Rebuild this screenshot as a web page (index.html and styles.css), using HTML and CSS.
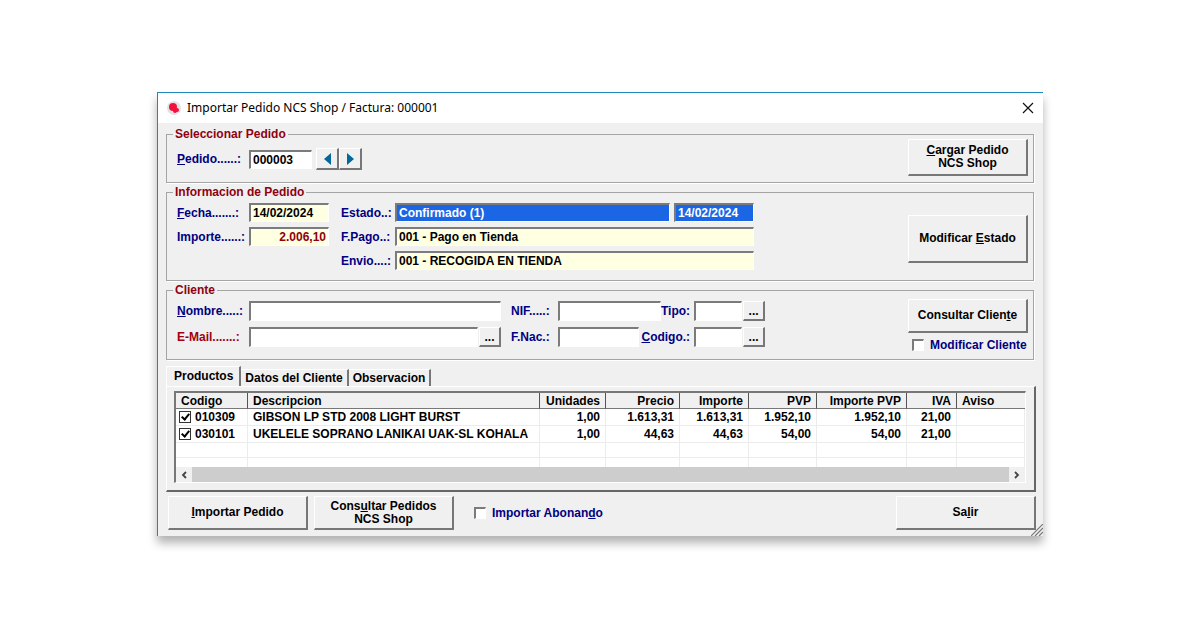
FILE: index.html
```html
<!DOCTYPE html>
<html lang="es">
<head>
  <meta charset="UTF-8" />
  <meta name="viewport" content="width=device-width, initial-scale=1.0"/>
  <title>Importar Pedido NCS Shop</title>
  <link rel="stylesheet" href="styles.css">
</head>
<body>
  <main class="window">
    <header class="titlebar">
      <svg class="logo" width="14" height="14" viewBox="0 0 14 14" aria-hidden="true">
        <circle cx="7" cy="7" r="7" fill="#e2e2e4"/>
        <circle cx="6" cy="6" r="4" fill="#f5103c"/>
        <circle cx="10" cy="9" r="2" fill="#f5103c"/>
        <circle cx="8" cy="10" r="2" fill="#f5103c"/>
      </svg>
      <h1>Importar Pedido NCS Shop / Factura: 000001</h1>
      <button type="button" class="close" aria-label="Cerrar">
        <svg width="12" height="12" viewBox="0 0 12 12"><path d="M1 1L11 11M11 1L1 11" stroke="#111" stroke-width="1.2"/></svg>
      </button>
    </header>

    <form class="content">
      <fieldset class="select-order">
        <legend>Seleccionar Pedido</legend>
        <div class="group">
          <div class="fields">
            <div class="row">
              <label class="first" for="pedido"><u>P</u>edido......:</label>
              <input class="w-order" type="text" id="pedido" value="000003" />
              <div class="nav">
                <button type="button" aria-label="Anterior"><svg width="7" height="12" viewBox="0 0 7 12"><path d="M7 0V12L0 6Z" fill="#00689b"/></svg></button>
                <button type="button" aria-label="Siguiente"><svg width="7" height="12" viewBox="0 0 7 12"><path d="M0 0V12L7 6Z" fill="#00689b"/></svg></button>
              </div>
            </div>
          </div>
          <div class="side">
            <button type="button" class="btn load"><span><u>C</u>argar Pedido<br>NCS Shop</span></button>
          </div>
        </div>
      </fieldset>

      <fieldset class="order-info">
        <legend>Informacion de Pedido</legend>
        <div class="group">
          <div class="fields">
            <div class="row">
              <label class="first" for="fecha"><u>F</u>echa.......:</label>
              <input class="w-date cream" type="text" id="fecha" value="14/02/2024" readonly />
              <label class="second" for="estado">Estado..:</label>
              <input class="w-state selected" type="text" id="estado" value="Confirmado (1)" readonly />
              <input class="w-date selected state-date" type="text" aria-label="Fecha estado" value="14/02/2024" readonly />
            </div>
            <div class="row">
              <label class="first" for="importe">Importe......:</label>
              <input class="w-date cream amount" type="text" id="importe" value="2.006,10" readonly />
              <label class="second" for="fpago">F.Pago..:</label>
              <input class="w-long cream" type="text" id="fpago" value="001 - Pago en Tienda" readonly />
            </div>
            <div class="row">
              <span class="blank"></span>
              <label class="second" for="envio">Envio....:</label>
              <input class="w-long cream" type="text" id="envio" value="001 - RECOGIDA EN TIENDA" readonly />
            </div>
          </div>
          <div class="side">
            <button type="button" class="btn state"><span>Modificar <u>E</u>stado</span></button>
          </div>
        </div>
      </fieldset>

      <fieldset class="client">
        <legend>Cliente</legend>
        <div class="group">
          <div class="fields">
            <div class="row">
              <label class="first" for="nombre"><u>N</u>ombre.....:</label>
              <input class="w-name" type="text" id="nombre" />
              <label class="third" for="nif">NIF.....:</label>
              <input class="w-nif" type="text" id="nif" />
              <label class="fourth" for="tipo">Tipo:</label>
              <input class="w-code" type="text" id="tipo" />
              <button type="button" class="more" aria-label="Buscar tipo">...</button>
            </div>
            <div class="row">
              <label class="first required" for="email">E-Mail.......:</label>
              <input class="w-mail" type="text" id="email" />
              <button type="button" class="more" aria-label="Buscar e-mail">...</button>
              <label class="third" for="fnac">F.Nac.:</label>
              <input class="w-birth" type="text" id="fnac" />
              <label class="fourth" for="codigo"><u>C</u>odigo.:</label>
              <input class="w-code" type="text" id="codigo" />
              <button type="button" class="more" aria-label="Buscar codigo">...</button>
            </div>
          </div>
          <div class="side">
            <button type="button" class="btn"><span>Consultar Clien<u>t</u>e</span></button>
            <label class="check"><input type="checkbox" /> Modificar Cliente</label>
          </div>
        </div>
      </fieldset>

      <div class="tabs" role="tablist">
        <button type="button" role="tab" aria-selected="true" class="active">Productos</button>
        <button type="button" role="tab" aria-selected="false">Datos del Cliente</button>
        <button type="button" role="tab" aria-selected="false">Observacion</button>
      </div>
      <div class="panel">
        <div class="list">
          <table>
            <colgroup>
              <col class="c-code"><col class="c-desc"><col class="c-units"><col class="c-price"><col class="c-amount">
              <col class="c-pvp"><col class="c-total"><col class="c-iva"><col>
            </colgroup>
            <thead>
              <tr>
                <th class="text">Codigo</th>
                <th class="text">Descripcion</th>
                <th>Unidades</th>
                <th>Precio</th>
                <th>Importe</th>
                <th>PVP</th>
                <th>Importe PVP</th>
                <th>IVA</th>
                <th class="text">Aviso</th>
              </tr>
            </thead>
            <tbody>
              <tr>
                <td class="code"><label><input type="checkbox" checked />010309</label></td>
                <td class="text">GIBSON LP STD 2008 LIGHT BURST</td>
                <td>1,00</td>
                <td>1.613,31</td>
                <td>1.613,31</td>
                <td>1.952,10</td>
                <td>1.952,10</td>
                <td>21,00</td>
                <td></td>
              </tr>
              <tr>
                <td class="code"><label><input type="checkbox" checked />030101</label></td>
                <td class="text">UKELELE SOPRANO LANIKAI UAK-SL KOHALA</td>
                <td>1,00</td>
                <td>44,63</td>
                <td>44,63</td>
                <td>54,00</td>
                <td>54,00</td>
                <td>21,00</td>
                <td></td>
              </tr>
              <tr class="empty"><td></td><td></td><td></td><td></td><td></td><td></td><td></td><td></td><td></td></tr>
              <tr class="cut"><td></td><td></td><td></td><td></td><td></td><td></td><td></td><td></td><td></td></tr>
            </tbody>
          </table>
          <div class="scrollbar">
            <button type="button" aria-label="Desplazar a la izquierda"><svg width="6" height="8" viewBox="0 0 6 8"><path d="M5 1L2 4L5 7" fill="none" stroke="#444" stroke-width="1.8"/></svg></button>
            <div class="thumb"></div>
            <button type="button" aria-label="Desplazar a la derecha"><svg width="6" height="8" viewBox="0 0 6 8"><path d="M1 1L4 4L1 7" fill="none" stroke="#444" stroke-width="1.8"/></svg></button>
          </div>
        </div>
      </div>

      <div class="actions">
        <button type="button" class="btn"><span><u>I</u>mportar Pedido</span></button>
        <button type="button" class="btn"><span>Cons<u>u</u>ltar Pedidos<br>NCS Shop</span></button>
        <label class="check"><input type="checkbox" /> <span>Importar Abonan<u>d</u>o</span></label>
        <button type="button" class="btn exit"><span>Sa<u>l</u>ir</span></button>
      </div>
    </form>
    <svg class="grip" width="12" height="12" viewBox="0 0 12 12" aria-hidden="true">
      <path d="M0 12L12 0M4 12L12 4M8 12L12 8" stroke="#777" stroke-width="1.2"/>
    </svg>
  </main>
</body>
</html>
```
FILE: styles.css
```css
* {
  box-sizing: border-box;
}
body {
  margin: 0;
  padding: 92px 157px;
  background: #fff;
  font: bold 12px/14px "Liberation Sans", Arial, sans-serif;
  color: #000;
}
button, input {
  font: inherit;
  color: inherit;
  margin: 0;
}
button {
  padding: 0;
  background: #f0f0f0;
  white-space: nowrap;
}
.window {
  position: relative;
  background: #f0f0f0;
  border-top: 1px solid #1f86c0;
  border-left: 1px solid #1f86c0;
  box-shadow: 0 7px 9px rgba(0,0,0,0.3);
}

/* title bar */
.titlebar {
  display: flex;
  align-items: center;
  height: 30px;
  padding: 0 9px;
  background: #fff;
}
.titlebar h1 {
  margin: 0 auto 0 6px;
  font: 12px/16px "Noto Sans", "Open Sans", sans-serif;
}
.close {
  display: flex;
  border: 0;
  background: none;
}

/* groups */
.content {
  padding: 6px 7px 6px 8px;
}
fieldset {
  min-width: 0;
  margin: 0 2px 4px 0;
  padding: 0;
  border: 1px solid #a5a5a5;
  box-shadow: 1px 1px 0 #fff;
}
legend {
  margin-left: 6px;
  padding: 0 2px;
  line-height: 10px;
  color: #900010;
}
.group {
  display: flex;
  justify-content: space-between;
  padding: 0 5px 0 10px;
}
.select-order .group {
  height: 43px;
}
.order-info .group {
  height: 83px;
}
.client .group {
  height: 64px;
}
.fields {
  display: flex;
  flex-direction: column;
  gap: 5px;
  padding-top: 6px;
}
.select-order .fields {
  padding-top: 9px;
}
.row {
  display: flex;
  align-items: center;
}
.row label {
  color: #000080;
  white-space: nowrap;
}
.row .required {
  color: #a00010;
}
.first {
  width: 72px;
}
.second {
  width: 66px;
  padding-left: 12px;
}
.third {
  width: 57px;
  padding-left: 10px;
}
.fourth {
  flex: 1;
  padding-right: 4px;
  text-align: right;
}
.blank {
  width: 152px;
}
input[type="text"] {
  height: 19px;
  padding: 0 2px;
  border: 1px solid #fff;
  border-top: 2px solid #7b7b7b;
  border-left: 2px solid #7b7b7b;
  border-radius: 0;
  background: #fff;
  outline: 0;
}
.client input[type="text"] {
  height: 20px;
}
.client .fields {
  gap: 6px;
}
input.cream {
  background: #ffffe1;
}
input.selected {
  background: #1a66e5;
  color: #fff;
}
input.amount {
  color: #900010;
  text-align: right;
}
.w-order {
  width: 63px;
}
.w-date {
  width: 80px;
}
.w-state {
  width: 275px;
}
.state-date {
  margin-left: 4px;
}
.w-long {
  width: 359px;
}
.w-name {
  width: 252px;
}
.w-mail {
  width: 229px;
}
.w-nif {
  width: 103px;
}
.w-birth {
  width: 81px;
}
.w-code {
  width: 48px;
}
.nav {
  display: flex;
  margin-left: 4px;
}
.nav button {
  display: flex;
  align-items: center;
  justify-content: center;
  width: 23px;
  height: 22px;
}
.nav button, .more, .btn {
  border: 1px solid #fff;
  border-right: 2px solid #777;
  border-bottom: 2px solid #777;
}
.more {
  width: 22px;
  height: 20px;
  margin-left: 1px;
}
.btn {
  height: 34px;
  line-height: 13px;
}
.side {
  display: flex;
  flex-direction: column;
  width: 120px;
  padding-top: 4px;
  gap: 5px;
}
.select-order .side {
  padding-top: 0;
}
.order-info .side {
  padding-top: 18px;
}
.load {
  height: 37px;
}
.state {
  height: 48px;
}
.check {
  display: flex;
  align-items: center;
  gap: 6px;
  padding-left: 4px;
  color: #000080;
  white-space: nowrap;
}
input[type="checkbox"] {
  appearance: none;
  width: 12px;
  height: 12px;
  border: 1px solid #fff;
  border-top: 2px solid #7b7b7b;
  border-left: 2px solid #7b7b7b;
  background: #fff;
}

/* tabs */
.tabs {
  display: flex;
  align-items: flex-end;
  padding-top: 2px;
}
.tabs button {
  height: 17px;
  padding: 0 4px;
  border: 0;
  border-top: 1px solid #fff;
  border-right: 2px solid #777;
}
.tabs .active {
  height: 20px;
  padding: 0 6px 2px 7px;
  border-left: 1px solid #fff;
}
.panel {
  padding: 4px 8px 7px 7px;
  border: 1px solid #fff;
  border-right: 2px solid #666;
  border-bottom: 2px solid #666;
}
.list {
  border: 1px solid #fff;
  border-top: 2px solid #777;
  border-left: 2px solid #777;
  background: #fff;
}
table {
  width: 100%;
  table-layout: fixed;
  border-collapse: separate;
  border-spacing: 0;
}
.c-code {
  width: 72px;
}
.c-desc {
  width: 292px;
}
.c-units {
  width: 66px;
}
.c-price {
  width: 74px;
}
.c-amount {
  width: 69px;
}
.c-pvp {
  width: 68px;
}
.c-total {
  width: 90px;
}
.c-iva {
  width: 50px;
}
th, td {
  padding: 0 5px;
  text-align: right;
  white-space: nowrap;
}
th {
  height: 16px;
  background: #f0f0f0;
  border-right: 1px solid #555;
  border-bottom: 1px solid #777;
}
th:last-child {
  border-right: 0;
}
td {
  height: 17px;
  border-right: 1px solid #ececec;
  border-bottom: 1px solid #ececec;
}
th.text, td.text {
  text-align: left;
}
td.code {
  padding: 0 3px;
}
td.code label {
  display: flex;
  align-items: center;
  gap: 4px;
}
.list input[type="checkbox"] {
  border: 1px solid #333;
}
.list input[type="checkbox"]:checked {
  background: #fff linear-gradient(#fff, #fff);
}
.list input[type="checkbox"]:checked::before {
  content: "";
  display: block;
  width: 3px;
  height: 6px;
  margin: 0 auto;
  border: solid #000;
  border-width: 0 2px 2px 0;
  transform: rotate(40deg);
}
tr.empty td {
  height: 15px;
}
tr.cut td {
  height: 9px;
  border-bottom: 0;
}
.scrollbar {
  display: flex;
  height: 15px;
  background: #f0f0f0;
}
.scrollbar button {
  display: flex;
  align-items: center;
  justify-content: center;
  width: 16px;
  border: 0;
}
.thumb {
  flex: 1;
  background: #cdcdcd;
}

/* bottom row */
.actions {
  display: flex;
  align-items: center;
  gap: 6px;
  padding: 4px 0 0 2px;
}
.actions .btn {
  width: 140px;
}
.actions .check {
  margin-left: 10px;
}
.actions .exit {
  margin-left: auto;
}
.grip {
  position: absolute;
  right: 0;
  bottom: 0;
}
```
